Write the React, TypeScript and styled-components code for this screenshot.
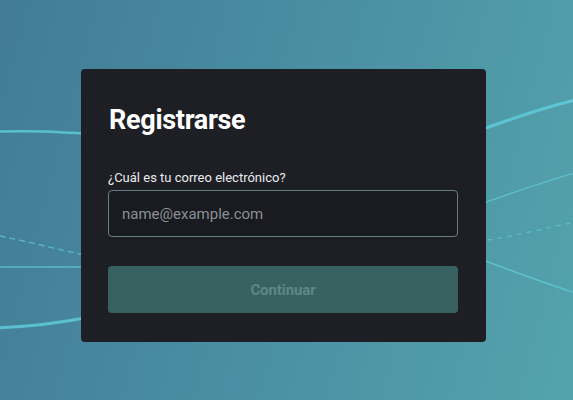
import React from "react";
import styled, { createGlobalStyle } from "styled-components";

const Global = createGlobalStyle`
  html, body { margin: 0; padding: 0; }
  body {
    width: 573px;
    height: 400px;
    overflow: hidden;
    font-family: Roboto, "Noto Sans", sans-serif;
  }
`;

const Page = styled.div`
  position: relative;
  width: 573px;
  height: 400px;
  background: linear-gradient(105deg, #427c96 0%, #4a8fa3 50%, #54a3ac 100%);
  box-sizing: border-box;
  padding: 69px 0 0 81px;
  overflow: hidden;
`;

const Waves = styled.svg`
  position: absolute;
  inset: 0;
  width: 573px;
  height: 400px;
`;

const Card = styled.div`
  position: relative;
  width: 405px;
  height: 273px;
  box-sizing: border-box;
  background: #1e1f24;
  border-radius: 4px;
  padding: 34px 28px 0 27px;
  display: flex;
  flex-direction: column;
`;

const Title = styled.h1`
  margin: 0 0 0 1px;
  font-size: 27px;
  line-height: 34px;
  font-weight: 700;
  color: #ffffff;
  letter-spacing: -0.3px;
`;

const Label = styled.label`
  margin-top: 33px;
  font-size: 13px;
  line-height: 16px;
  color: #e9ecee;
  letter-spacing: 0;
`;

const Input = styled.input`
  margin-top: 4px;
  width: 100%;
  height: 47px;
  box-sizing: border-box;
  background: #1a1b20;
  border: 1px solid #667f84;
  border-radius: 4px;
  padding: 0 13px;
  font-family: inherit;
  font-size: 15px;
  color: #e0e0e0;
  outline: none;
  &::placeholder { color: #8a8f95; }
`;

const Button = styled.button`
  margin-top: 29px;
  width: 100%;
  height: 47px;
  border: none;
  border-radius: 4px;
  background: #386262;
  color: #5d8886;
  font-family: inherit;
  font-size: 15px;
  font-weight: 700;
  letter-spacing: -0.1px;
`;

export default function App() {
  return (
    <>
      <Global />
      <Page>
        <Waves viewBox="0 0 573 400">
          <g fill="none" stroke="#5fd0dc" strokeLinecap="round">
            <path d="M-10 132 C 30 130, 60 132, 90 134" strokeWidth="2.5" strokeOpacity="0.8" />
            <path d="M0 236 C 30 242, 60 250, 90 256" strokeWidth="1.3" strokeDasharray="5 5" strokeOpacity="0.7" />
            <path d="M-10 267 L 90 267" strokeWidth="1.3" strokeOpacity="0.7" />
            <path d="M-10 328 C 30 327, 60 323, 90 317" strokeWidth="3" strokeOpacity="0.8" />
            <path d="M480 130 C 510 120, 545 106, 585 98" strokeWidth="3" strokeOpacity="0.8" />
            <path d="M480 204 C 510 194, 545 181, 585 170" strokeWidth="1.3" strokeOpacity="0.7" />
            <path d="M488 240 C 515 236, 545 228, 585 220" strokeWidth="1.3" strokeDasharray="4 6" strokeOpacity="0.6" />
            <path d="M480 259 C 510 270, 540 282, 585 296" strokeWidth="1.5" strokeOpacity="0.7" />
          </g>
        </Waves>
        <Card>
          <Title>Registrarse</Title>
          <Label htmlFor="email">¿Cuál es tu correo electrónico?</Label>
          <Input id="email" type="email" placeholder="name@example.com" />
          <Button disabled>Continuar</Button>
        </Card>
      </Page>
    </>
  );
}
